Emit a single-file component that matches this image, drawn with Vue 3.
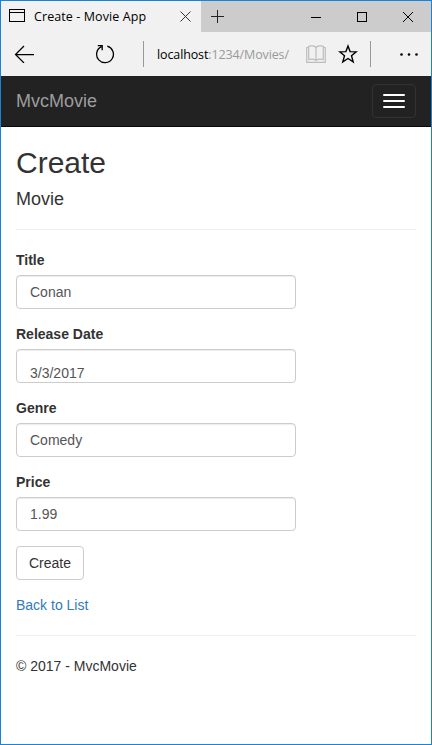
<script setup>
import { ref } from 'vue'

const fields = ref([
  { id: 'title', label: 'Title', value: 'Conan' },
  { id: 'release', label: 'Release Date', value: '3/3/2017', low: true },
  { id: 'genre', label: 'Genre', value: 'Comedy' },
  { id: 'price', label: 'Price', value: '1.99' },
])
</script>

<template>
  <div class="window">
    <div class="tabs">
      <div class="tab">
        <svg class="tab-icon" width="16" height="13" viewBox="0 0 16 13" fill="none" stroke="#000" shape-rendering="crispEdges">
          <rect x=".5" y=".5" width="15" height="12" />
          <path d="M0 3.5h16" />
        </svg>
        <span class="tab-title">Create - Movie App</span>
        <svg class="tab-close" width="11" height="11" viewBox="0 0 11 11" fill="none" stroke="#333">
          <path d="M.5.5l10 10M10.500.500l-10 10" />
        </svg>
      </div>
      <svg class="new-tab" width="13" height="13" viewBox="0 0 13 13" stroke="#222" shape-rendering="crispEdges">
        <path d="M0 6.500h13M6.500 0v13" />
      </svg>
      <div class="controls">
        <svg width="10" height="10" viewBox="0 0 10 10" stroke="#000" shape-rendering="crispEdges"><path d="M0 5.500h10" /></svg>
        <svg width="10" height="10" viewBox="0 0 10 10" fill="none" stroke="#000" shape-rendering="crispEdges"><rect x=".5" y=".5" width="9" height="9" /></svg>
        <svg width="10" height="10" viewBox="0 0 10 10" fill="none" stroke="#000"><path d="M0 0l10 10M10 0L0 10" /></svg>
      </div>
    </div>

    <div class="toolbar">
      <svg class="back" width="20" height="18" viewBox="0 0 20 18" fill="none" stroke="#000" stroke-width="1.250">
        <path d="M20 9.500H1.500M10 1L1.500 9.500 10 18" />
      </svg>
      <svg class="reload" width="20" height="20" viewBox="0 0 20 20" fill="none" stroke="#000" stroke-width="1.300">
        <path d="M12.300 2.200A8.400 8.400 0 1 1 6.400 2.700M2.800 1.700h4.400v4.600" />
      </svg>
      <span class="rule first"></span>
      <div class="address">localhost<span>:1234/Movies/</span></div>
      <svg class="book" width="20" height="19" viewBox="0 0 20 19" fill="none" stroke="#bdbdbd" stroke-width="1.200">
        <path d="M10 2.500v13M10 2.500C8.500.700 4.500.500 2.700 1.300v13.200c2-.8 5.800-.5 7.300 1 1.500-1.500 5.300-1.800 7.300-1V1.300C15.500.500 11.500.700 10 2.500M2.700 2.500H.7v14.900h18.600V2.500h-2" />
      </svg>
      <svg class="star" width="20" height="20" viewBox="0 0 20 20" fill="none" stroke="#000" stroke-width="1.400">
        <path d="M10 2l2.100 5.600 6.200.2-4.800 3.900 1.700 6.200L10 14.500l-5.200 3.400 1.700-6.200L1.700 7.800l6.200-.2z" />
      </svg>
      <span class="rule second"></span>
      <svg class="more" width="18" height="3" viewBox="0 0 18 3">
        <circle cx="1.500" cy="1.500" r="1.300" /><circle cx="9" cy="1.500" r="1.300" /><circle cx="16.500" cy="1.500" r="1.300" />
      </svg>
    </div>

    <nav class="navbar">
      <a class="brand">MvcMovie</a>
      <button class="toggle" type="button" aria-label="Toggle navigation"><i></i><i></i><i></i></button>
    </nav>

    <main class="content">
      <h2>Create</h2>
      <h4>Movie</h4>
      <hr />
      <form @submit.prevent>
        <div v-for="f in fields" :key="f.id" class="group">
          <label :for="f.id">{{ f.label }}</label>
          <input :id="f.id" v-model="f.value" :class="{ low: f.low }" type="text" />
        </div>
        <button class="submit" type="submit">Create</button>
      </form>
      <a class="list-link">Back to List</a>
      <hr />
      <footer>© 2017 - MvcMovie</footer>
    </main>
  </div>
</template>

<style>
body { margin: 0; overflow: hidden; }
</style>

<style scoped>
* { box-sizing: border-box; }
svg { display: block; flex: none; }
.window {
  width: 432px;
  height: 745px;
  border: 1px solid #1883d7;
  background: #fff;
  color: #333;
  font: 14px/20px "Liberation Sans", Arial, sans-serif;
  overflow: hidden;
}
.tabs {
  display: flex;
  align-items: center;
  height: 31px;
  background: #ccc;
}
.tab {
  display: flex;
  align-items: center;
  width: 200px;
  height: 31px;
  padding-left: 8px;
  background: #f1f1f1;
}
.tab-icon { margin-top: -2px; }
.tab-title {
  flex: none;
  width: 154px;
  padding-left: 9px;
  color: #000;
  font: 12.5px/20px "Open Sans", sans-serif;
  letter-spacing: .09px;
  white-space: nowrap;
}
.tab-close { margin-left: 1px; }
.new-tab { margin-left: 10px; }
.controls {
  display: flex;
  gap: 36px;
  margin-left: 87px;
}
.toolbar {
  display: flex;
  align-items: center;
  height: 44px;
  background: #f1f1f1;
}
.back { margin-left: 13px; }
.reload { margin-left: 61px; }
.rule {
  flex: none;
  width: 1px;
  height: 26px;
  background: #999;
}
.first { margin-left: 28px; }
.address {
  width: 132px;
  margin-left: 13px;
  padding-top: 1px;
  color: #000;
  font: 12.5px/20px "Open Sans", sans-serif;
  letter-spacing: -.12px;
  white-space: nowrap;
}
.address span { color: #999; }
.book { margin-left: 17px; }
.star { margin-left: 12px; }
.second { margin-left: 12px; }
.more { margin-left: 29px; }
.navbar {
  display: flex;
  align-items: center;
  justify-content: space-between;
  height: 51px;
  padding: 0 15px;
  background: #222;
  border-bottom: 1px solid #080808;
}
.brand {
  color: #9d9d9d;
  font-size: 18px;
}
.toggle {
  display: flex;
  flex-direction: column;
  gap: 4px;
  width: 44px;
  height: 34px;
  padding: 9px 10px;
  background: transparent;
  border: 1px solid #333;
  border-radius: 4px;
}
.toggle i {
  width: 22px;
  height: 2px;
  background: #fff;
  border-radius: 1px;
}
.content { padding: 19px 15px; }
h2, h4 { margin: 0; font-weight: 400; }
h2 { font-size: 30px; line-height: 33px; }
h4 { margin-top: 10px; font-size: 18px; line-height: 20px; }
hr {
  margin: 20px 0;
  border: 0;
  border-top: 1px solid #eee;
}
.group { margin-bottom: 15px; }
label {
  display: block;
  margin-bottom: 5px;
  font-weight: 700;
}
input {
  display: block;
  width: 280px;
  height: 34px;
  padding: 6px 13px;
  border: 1px solid #ccc;
  border-radius: 4px;
  background: #fff;
  box-shadow: inset 0 1px 1px rgba(0, 0, 0, .075);
  color: #555;
  font: inherit;
}
.low { padding: 14px 13px 0; }
.submit {
  display: block;
  width: 68px;
  height: 34px;
  margin-bottom: 15px;
  padding: 0;
  border: 1px solid #ccc;
  border-radius: 4px;
  background: #fff;
  color: #333;
  font: inherit;
}
.list-link { display: block; color: #337ab7; }
</style>
